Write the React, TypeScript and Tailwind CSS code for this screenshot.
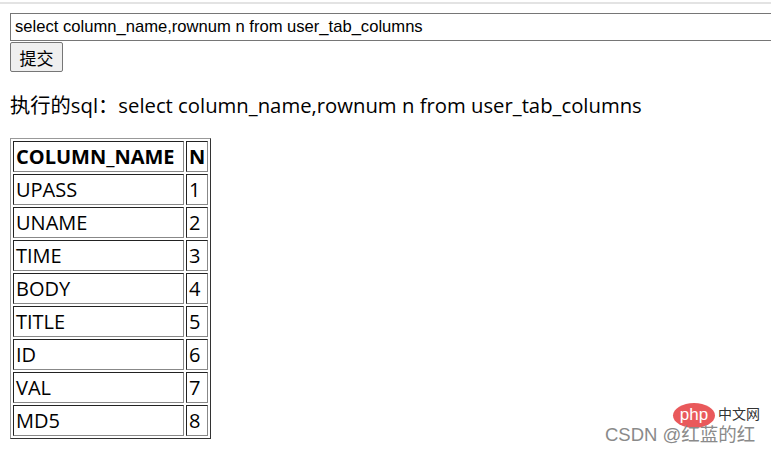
import React from "react";

const rows: [string, number][] = [
  ["UPASS", 1],
  ["UNAME", 2],
  ["TIME", 3],
  ["BODY", 4],
  ["TITLE", 5],
  ["ID", 6],
  ["VAL", 7],
  ["MD5", 8],
];

const sql = "select column_name,rownum n from user_tab_columns";

const cell =
  "h-[31px] px-[2px] py-0 align-middle text-[20px] leading-[27px] border border-t-[#222] border-l-[#222] border-r-[#888] border-b-[#888]";

export default function App() {
  return (
    <div className="relative w-[771px] h-[456px] overflow-hidden bg-white text-black">
      {/* top rule */}
      <div className="h-[2px]" />
      <div className="h-[2px] bg-[#e3e3e3]" />

      <div className="pl-[10px] pt-[9px]">
        <input
          readOnly
          value={sql}
          className="block w-[800px] h-[28px] border border-[#767676] px-[4px] text-[16.6px] text-black outline-none"
          style={{ fontFamily: '"Liberation Sans", Arial, sans-serif' }}
        />
        <button
          className="block mt-[1px] w-[53px] h-[30px] border border-[#767676] rounded-[2px] bg-[#efefef] text-[17px] leading-none text-black"
          style={{ fontFamily: '"Noto Sans CJK SC", sans-serif' }}
        >
          提交
        </button>

        <p
          className="mt-[20px] h-[26px] text-[20.3px] leading-[26px] text-black"
          style={{ fontFamily: '"Open Sans", "Noto Sans CJK SC", sans-serif' }}
        >
          执行的sql：{sql}
        </p>

        <table
          className="mt-[20px] border-separate border-spacing-[2px] border border-t-[#999] border-l-[#999] border-r-[#333] border-b-[#333]"
          style={{ fontFamily: '"Open Sans", sans-serif' }}
        >
          <thead>
            <tr>
              <th className={`${cell} w-[171px] text-left font-bold`}>COLUMN_NAME</th>
              <th className={`${cell} w-[21px] text-left font-bold`}>N</th>
            </tr>
          </thead>
          <tbody>
            {rows.map(([name, n]) => (
              <tr key={name}>
                <td className={cell}>{name}</td>
                <td className={cell}>{n}</td>
              </tr>
            ))}
          </tbody>
        </table>
      </div>

      {/* watermark */}
      <div className="absolute left-[673px] top-[403px] w-[42px] h-[25px] rounded-[50%] bg-[#e9595b] flex items-center justify-center">
        <span
          className="text-[17px] leading-none text-white pb-[2px]"
          style={{ fontFamily: '"Liberation Sans", sans-serif' }}
        >
          php
        </span>
      </div>
      <div
        className="absolute left-[718px] top-[406px] text-[14px] leading-none text-[#333]"
        style={{ fontFamily: '"Noto Sans CJK SC", sans-serif' }}
      >
        中文网
      </div>
      <div
        className="absolute left-[605px] top-[426px] text-[18.5px] leading-none text-[#8a8a8a]"
        style={{ fontFamily: '"Liberation Sans", "Noto Sans CJK SC", sans-serif' }}
      >
        CSDN @红蓝的红
      </div>
    </div>
  );
}
